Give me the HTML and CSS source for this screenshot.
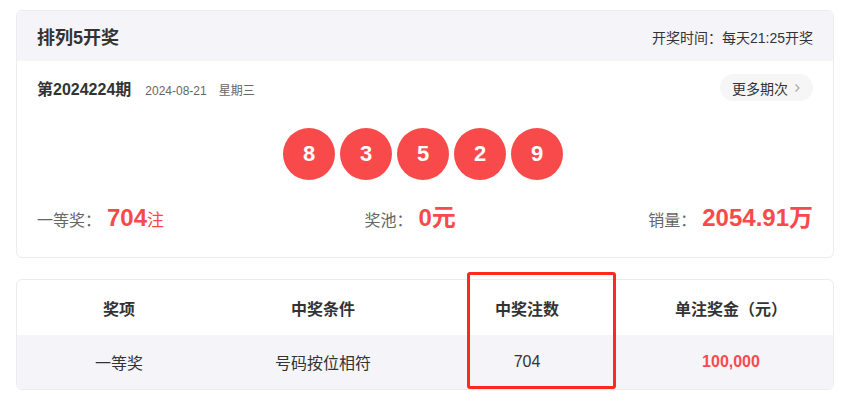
FILE: index.html
```html
<!DOCTYPE html>
<html lang="zh-CN">
<head>
<meta charset="utf-8">
<title>排列5开奖</title>
<link rel="stylesheet" href="styles.css">
</head>
<body>
<div class="page">
  <section class="card draw">
    <header class="draw-head">
      <h1 class="title">排列5开奖</h1>
      <div class="time">开奖时间：每天21:25开奖</div>
    </header>
    <div class="draw-body">
      <div class="issue-row">
        <div class="issue">
          <span class="issue-no">第2024224期</span>
          <span class="issue-date">2024-08-21</span>
          <span class="issue-week">星期三</span>
        </div>
        <a class="more">更多期次<svg class="chev" width="7" height="10" viewBox="0 0 7 10"><path d="M1.5 1.5 L5 5 L1.5 8.5" fill="none" stroke="#aaa" stroke-width="1.3"/></svg></a>
      </div>
      <div class="balls">
        <span class="ball">8</span>
        <span class="ball">3</span>
        <span class="ball">5</span>
        <span class="ball">2</span>
        <span class="ball">9</span>
      </div>
      <div class="stats">
        <div class="stat"><span class="label">一等奖：</span><span class="val">704</span><span class="unit-s">注</span></div>
        <div class="stat mid"><span class="label">奖池：</span><span class="val">0</span><span class="unit">元</span></div>
        <div class="stat"><span class="label">销量：</span><span class="val">2054.91</span><span class="unit">万</span></div>
      </div>
    </div>
  </section>

  <section class="card prize">
    <div class="row head-row">
      <div class="cell">奖项</div>
      <div class="cell">中奖条件</div>
      <div class="cell">中奖注数</div>
      <div class="cell">单注奖金（元）</div>
    </div>
    <div class="row body-row">
      <div class="cell">一等奖</div>
      <div class="cell">号码按位相符</div>
      <div class="cell">704</div>
      <div class="cell red">100,000</div>
    </div>
    <div class="highlight"></div>
  </section>
</div>
</body>
</html>
```

FILE: styles.css
```css
* { box-sizing: border-box; }
html, body { margin: 0; padding: 0; background: #fff; }
body {
  font-family: "Liberation Sans", "Noto Sans CJK SC", sans-serif;
  color: #333;
}
.page {
  width: 818px;
  margin-left: 16px;
  padding-top: 10px;
}
.card {
  border: 1px solid #ececef;
  border-radius: 6px;
  background: #fff;
}
.draw-head {
  height: 50px;
  background: #f5f5f9;
  border-radius: 6px 6px 0 0;
  display: flex;
  align-items: center;
  justify-content: space-between;
  padding: 0 20px;
}
.title {
  margin: 0;
  font-size: 18px;
  font-weight: bold;
  color: #333;
}
.time {
  font-size: 14px;
  color: #333;
  padding-top: 2px;
}
.draw-body {
  padding: 13px 20px 27px 20px;
}
.issue-row {
  display: flex;
  align-items: center;
  justify-content: space-between;
  height: 27px;
}
.issue { display: flex; align-items: baseline; }
.issue-no { font-size: 16px; font-weight: bold; color: #333; }
.issue-date { font-size: 12px; color: #666; margin-left: 14px; }
.issue-week { font-size: 12px; color: #666; margin-left: 12px; }
.more {
  display: flex;
  align-items: center;
  height: 27px;
  padding: 0 12px 0 12px;
  background: #f6f6f7;
  border-radius: 14px;
  font-size: 14px;
  color: #333;
}
.chev { margin-left: 6px; }
.balls {
  display: flex;
  justify-content: center;
  gap: 5px;
  margin-top: 27px;
  padding-right: 4px;
}
.ball {
  width: 52px;
  height: 52px;
  border-radius: 50%;
  background: #f84a4b;
  color: #fff;
  font-size: 22px;
  font-weight: bold;
  display: flex;
  align-items: center;
  justify-content: center;
}
.stats {
  display: flex;
  justify-content: space-between;
  align-items: baseline;
  margin-top: 18px;
  height: 32px;
}
.stat { display: flex; align-items: baseline; }
.stat.mid { margin-left: 8px; }
.label { font-size: 16px; color: #666; }
.val { font-size: 24px; font-weight: bold; color: #f84a4b; margin-left: 6px; }
.unit { font-size: 24px; font-weight: bold; color: #f84a4b; }
.unit-s { font-size: 17px; color: #f84a4b; }

.prize {
  margin-top: 21px;
  position: relative;
}
.row {
  display: grid;
  grid-template-columns: repeat(4, 1fr);
  align-items: center;
}
.head-row {
  height: 55px;
  font-size: 16px;
  font-weight: bold;
  color: #333;
}
.body-row {
  height: 54px;
  background: #f5f5f9;
  font-size: 16px;
  color: #333;
  border-radius: 0 0 6px 6px;
}
.cell { text-align: center; }
.red { color: #f84a4b; font-weight: bold; }
.highlight {
  position: absolute;
  left: 450px;
  top: -8px;
  width: 149px;
  height: 117px;
  border: 3px solid #ff2a1f;
  border-radius: 3px;
}
```
